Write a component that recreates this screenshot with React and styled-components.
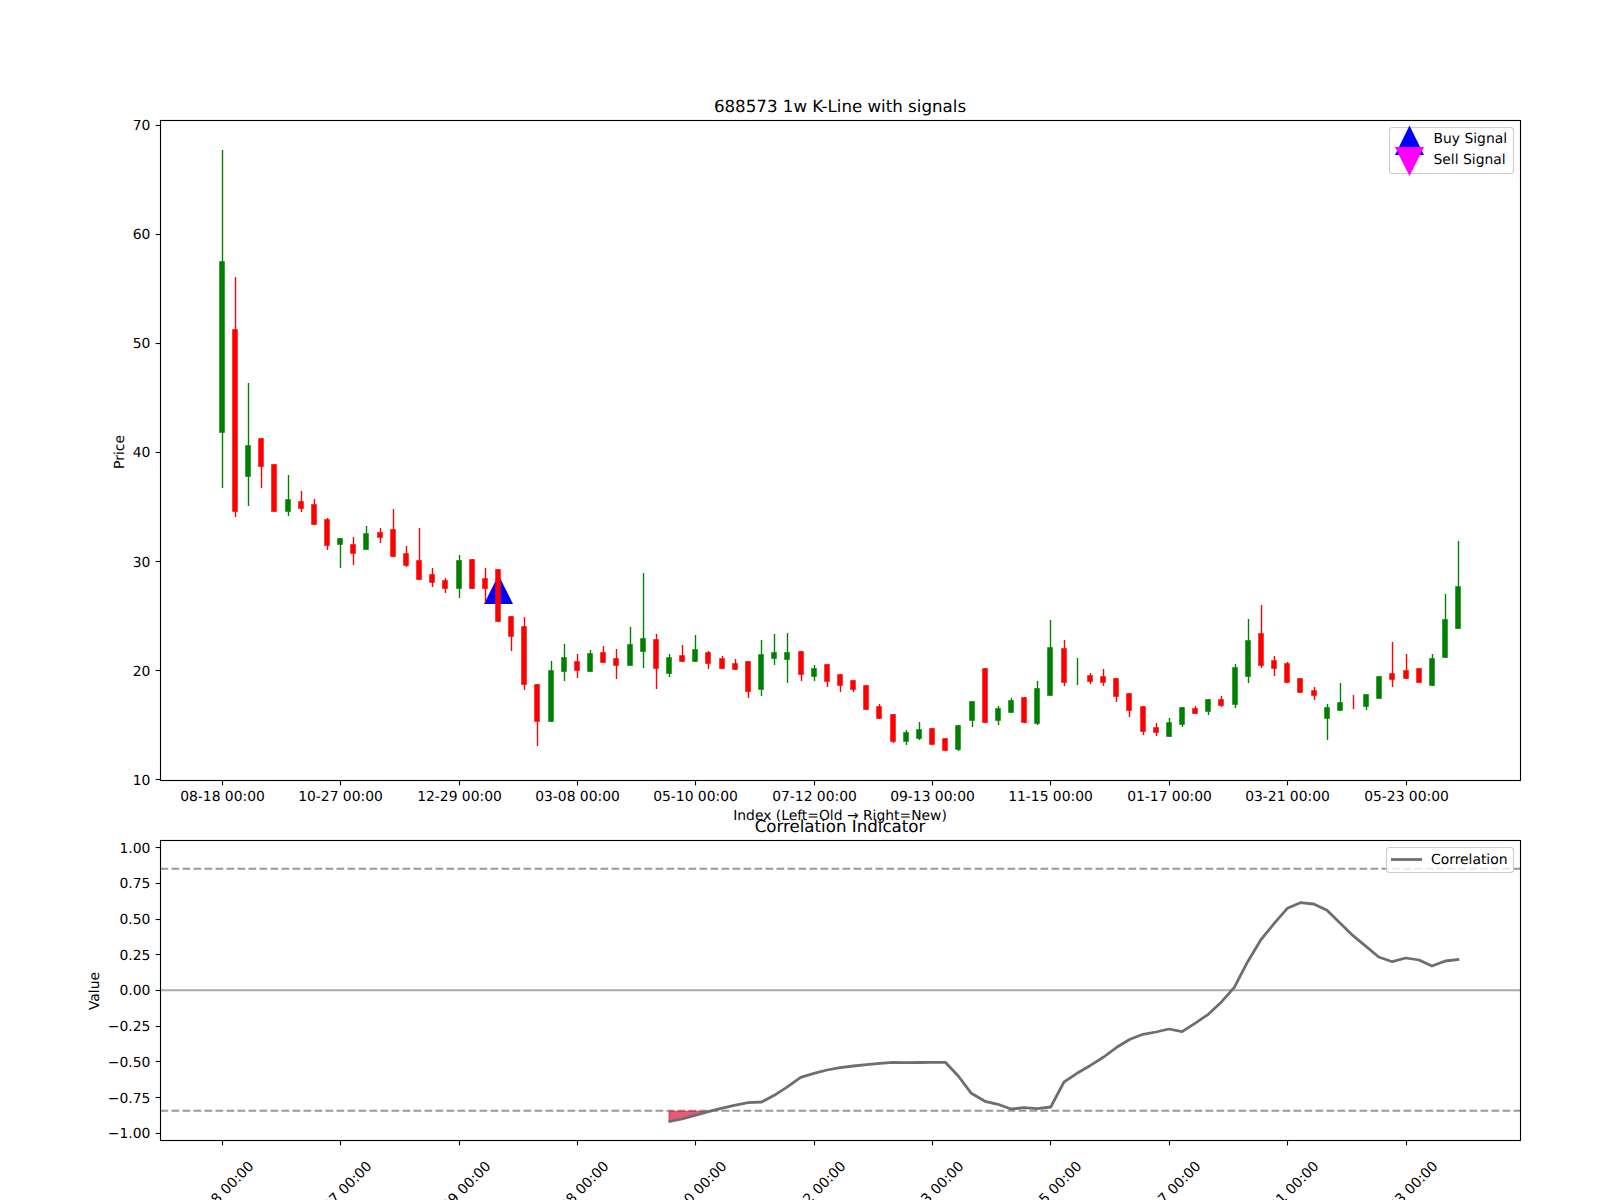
import React from 'react';
import styled, { createGlobalStyle } from 'styled-components';

const GlobalStyle = createGlobalStyle`
  html, body { margin: 0; padding: 0; background: #fff; }
`;

const Page = styled.div`
  width: 1600px;
  height: 1200px;
  overflow: hidden;
  background: #fff;
  display: flex;
  flex-direction: column;
`;

const Plot = styled.svg`
  display: block;
  flex: none;
  overflow: visible;
  font-family: 'DejaVu Sans', sans-serif;
  text-rendering: geometricPrecision;
`;

const TickLabel = styled.text`
  font-size: 13.89px;
  fill: #000;
  text-anchor: ${(p) => p.$anchor || 'middle'};
`;

const AxisLabel = styled.text`
  font-size: 13.89px;
  fill: #000;
  text-anchor: middle;
`;

const ChartTitle = styled.text`
  font-size: 16.67px;
  fill: #000;
  text-anchor: middle;
`;

const LegendText = styled.text`
  font-size: 13.89px;
  fill: #000;
`;

const LegendBox = styled.rect`
  fill: #fff;
  fill-opacity: 0.8;
  stroke: #ccc;
  stroke-width: 1.1;
`;

const Spines = styled.rect`
  fill: none;
  stroke: #000;
  stroke-width: 1.11;
`;

const Tick = styled.line`
  stroke: #000;
  stroke-width: 1.11;
`;

const Wick = styled.line`
  stroke: ${(p) => (p.$up ? '#ff0000' : '#008000')};
  stroke-width: 1.39;
`;

const Body = styled.rect`
  fill: ${(p) => (p.$up ? '#ff0000' : '#008000')};
  stroke: ${(p) => (p.$up ? '#ff0000' : '#008000')};
  stroke-opacity: 0.5;
  stroke-width: 1;
`;

const RefLine = styled.line`
  stroke: ${(p) => (p.$dashed ? '#999' : '#aaa')};
  stroke-width: 2.08;
  stroke-dasharray: ${(p) => (p.$dashed ? '7.7 3.3' : 'none')};
`;

const CorrLine = styled.polyline`
  fill: none;
  stroke: #6e6e6e;
  stroke-width: 2.78;
  stroke-linejoin: round;
`;

const LEFT = 160.5;
const RIGHT = 1520.5;

const X_TICKS = [
  [222.5, '08-18 00:00'],
  [340.5, '10-27 00:00'],
  [459.5, '12-29 00:00'],
  [577.5, '03-08 00:00'],
  [695.5, '05-10 00:00'],
  [814.5, '07-12 00:00'],
  [932.5, '09-13 00:00'],
  [1050.5, '11-15 00:00'],
  [1169.5, '01-17 00:00'],
  [1287.5, '03-21 00:00'],
  [1406.5, '05-23 00:00'],
];

// tick y, label, label baseline
const PRICE_TICKS = [
  [125.5, '70', 130],
  [234.5, '60', 239],
  [343.5, '50', 348],
  [452.5, '40', 457],
  [561.5, '30', 567],
  [670.5, '20', 676],
  [779.5, '10', 785],
];

const CORR_TICKS = [
  [847.5, '1.00', 853],
  [883.5, '0.75', 888],
  [919.5, '0.50', 924],
  [954.5, '0.25', 960],
  [990.5, '0.00', 995],
  [1026.5, '−0.25', 1031],
  [1061.5, '−0.50', 1067],
  [1097.5, '−0.75', 1103],
  [1133.5, '−1.00', 1138],
];

// x, red?, wick top, body top, body bottom, wick bottom (all in page pixels)
const CANDLES = [
  [222, 0, 150, 261, 433, 488],
  [235, 1, 277, 329, 512, 517],
  [248, 0, 383, 445, 477, 506],
  [261, 1, 438, 438, 467, 488],
  [274, 1, 464, 464, 512, 512],
  [288, 0, 475, 499, 512, 516],
  [301, 1, 491, 501, 509, 512],
  [314, 1, 499, 504, 525, 525],
  [327, 1, 518, 519, 546, 550],
  [340, 0, 538, 538, 545, 568],
  [353, 1, 537, 544, 554, 565],
  [366, 0, 526, 533, 550, 550],
  [380, 1, 528, 532, 538, 543],
  [393, 1, 509, 529, 557, 557],
  [406, 1, 546, 553, 566, 567],
  [419, 1, 528, 560, 580, 580],
  [432, 1, 568, 574, 583, 587],
  [445, 1, 578, 580, 589, 593],
  [459, 0, 555, 560, 589, 598],
  [472, 1, 559, 559, 589, 589],
  [485, 1, 568, 578, 589, 603],
  [498, 1, 569, 569, 622, 622],
  [511, 1, 616, 616, 637, 651],
  [524, 1, 617, 626, 685, 690],
  [537, 1, 684, 684, 722, 746],
  [551, 0, 661, 670, 722, 722],
  [564, 0, 644, 657, 672, 681],
  [577, 1, 654, 661, 671, 678],
  [590, 0, 650, 653, 672, 672],
  [603, 1, 646, 652, 663, 663],
  [616, 1, 649, 658, 666, 679],
  [630, 0, 627, 644, 666, 666],
  [643, 0, 573, 638, 652, 668],
  [656, 1, 634, 639, 669, 689],
  [669, 0, 654, 657, 674, 677],
  [682, 1, 645, 655, 662, 662],
  [695, 0, 635, 649, 662, 662],
  [708, 1, 651, 652, 664, 669],
  [722, 1, 656, 658, 669, 669],
  [735, 1, 659, 663, 670, 670],
  [748, 1, 661, 661, 692, 698],
  [761, 0, 640, 654, 690, 696],
  [774, 0, 634, 652, 659, 665],
  [787, 0, 633, 652, 660, 683],
  [801, 1, 651, 651, 675, 681],
  [814, 0, 665, 668, 677, 681],
  [827, 1, 664, 664, 682, 687],
  [840, 1, 674, 674, 686, 692],
  [853, 1, 680, 680, 690, 692],
  [866, 1, 685, 685, 710, 710],
  [879, 1, 704, 706, 719, 719],
  [893, 1, 714, 714, 742, 743],
  [906, 0, 730, 732, 742, 745],
  [919, 0, 722, 729, 739, 740],
  [932, 1, 728, 728, 745, 745],
  [945, 1, 738, 738, 751, 751],
  [958, 0, 725, 725, 750, 751],
  [972, 0, 701, 701, 721, 727],
  [985, 1, 668, 668, 723, 723],
  [998, 0, 706, 708, 721, 725],
  [1011, 0, 698, 700, 713, 713],
  [1024, 1, 697, 697, 723, 723],
  [1037, 0, 681, 688, 724, 725],
  [1050, 0, 620, 647, 696, 696],
  [1064, 1, 640, 648, 683, 686],
  [1077, 0, 658, 671, 671, 685],
  [1090, 1, 673, 675, 682, 684],
  [1103, 1, 669, 676, 683, 686],
  [1116, 1, 678, 678, 697, 702],
  [1129, 1, 693, 693, 711, 717],
  [1143, 1, 706, 706, 732, 735],
  [1156, 1, 723, 727, 733, 736],
  [1169, 0, 718, 722, 737, 737],
  [1182, 0, 707, 707, 725, 727],
  [1195, 1, 706, 708, 714, 714],
  [1208, 0, 699, 699, 712, 715],
  [1221, 1, 696, 699, 706, 707],
  [1235, 0, 664, 667, 705, 708],
  [1248, 0, 619, 640, 677, 683],
  [1261, 1, 605, 633, 666, 668],
  [1274, 1, 656, 660, 669, 676],
  [1287, 1, 662, 663, 683, 683],
  [1300, 1, 678, 678, 693, 693],
  [1314, 1, 687, 690, 696, 700],
  [1327, 0, 704, 707, 719, 740],
  [1340, 0, 683, 702, 711, 711],
  [1353, 1, 695, 702, 702, 709],
  [1366, 0, 694, 694, 707, 710],
  [1379, 0, 676, 676, 699, 699],
  [1392, 1, 642, 673, 680, 687],
  [1406, 1, 654, 670, 679, 679],
  [1419, 1, 668, 668, 683, 683],
  [1432, 0, 654, 658, 686, 686],
  [1445, 0, 594, 619, 658, 658],
  [1458, 0, 541, 586, 629, 629],
];

const CORRELATION = [
  [668.5, 1121.7], [682, 1119], [695, 1115.3], [708.3, 1111.7], [721.3, 1108.3],
  [734.3, 1105.3], [748, 1102.7], [761.7, 1102], [774.3, 1095.3], [787.7, 1086.7],
  [800.7, 1077.3], [814, 1073.3], [827, 1070], [840, 1067.7], [853.3, 1066],
  [866.7, 1064.7], [880, 1063.3], [893, 1062.3], [906, 1062.7], [919, 1062.5],
  [932.3, 1062.3], [945.3, 1062.3], [958.3, 1076], [971.3, 1093.3], [985, 1101.3],
  [998, 1104.3], [1011, 1109], [1024, 1107.7], [1037.3, 1108.7], [1050.7, 1107],
  [1064, 1082], [1077, 1073.3], [1090, 1065.7], [1103.7, 1057], [1116.7, 1047.3],
  [1130, 1039.3], [1143, 1034.3], [1156, 1032], [1169, 1029], [1182, 1031.7],
  [1195, 1023.3], [1208.3, 1014.3], [1221.7, 1001.7], [1234.3, 987.3], [1247.7, 961.7],
  [1260.7, 940], [1274, 923.7], [1287.3, 908.3], [1300.3, 902.7], [1313.7, 904],
  [1327, 910.3], [1340, 923], [1353, 935.7], [1366, 946.3], [1378.7, 957],
  [1392.3, 961.7], [1405.7, 958], [1419, 960], [1432, 966], [1445.3, 961],
  [1459.3, 959.3],
];

const points = (list) => list.map((p) => p.join(',')).join(' ');

const Candle = ({ candle: [x, red, wickTop, top, bottom, wickBottom] }) => (
  <g>
    <Wick $up={red} x1={x + 0.5} x2={x + 0.5} y1={wickTop} y2={wickBottom} />
    {bottom > top && (
      <Body $up={red} x={x - 2.5} y={top + 0.5} width={5} height={bottom - top - 1} />
    )}
  </g>
);

const YAxis = ({ ticks }) =>
  ticks.map(([y, label, baseline]) => (
    <g key={label}>
      <Tick x1={LEFT - 4.86} x2={LEFT} y1={y} y2={y} />
      <TickLabel $anchor="end" x={150.3} y={baseline}>
        {label}
      </TickLabel>
    </g>
  ));

const PriceChart = () => (
  <Plot width="1600" height="820" viewBox="0 0 1600 820">
    <ChartTitle x="840" y="112">688573 1w K-Line with signals</ChartTitle>
    <polygon points="484,604 513,604 498.5,575" fill="#0000ff" />
    {CANDLES.map((c) => (
      <Candle key={c[0]} candle={c} />
    ))}
    <Spines x={LEFT} y="120.5" width={RIGHT - LEFT} height="660" />
    <YAxis ticks={PRICE_TICKS} />
    <AxisLabel transform="translate(124 452) rotate(-90)">Price</AxisLabel>
    {X_TICKS.map(([x, label]) => (
      <g key={label}>
        <Tick x1={x} x2={x} y1="780.5" y2="785.4" />
        <TickLabel x={x} y="801">{label}</TickLabel>
      </g>
    ))}
    <AxisLabel x="840" y="820">Index (Left=Old → Right=New)</AxisLabel>
    <LegendBox x="1389.5" y="127.5" width="124" height="46" rx="3" />
    <polygon points="1395,155 1424,155 1409.5,125.5" fill="#0000ff" />
    <polygon points="1395,147 1424,147 1409.5,176" fill="#ff00ff" />
    <LegendText x="1433.5" y="142.5">Buy Signal</LegendText>
    <LegendText x="1433.5" y="163.5">Sell Signal</LegendText>
  </Plot>
);

const CorrelationChart = () => (
  <Plot width="1600" height="380" viewBox="0 820 1600 380">
    <ChartTitle x="840" y="832">Correlation Indicator</ChartTitle>
    <RefLine $dashed x1={LEFT} x2={RIGHT} y1="868.8" y2="868.8" />
    <RefLine x1={LEFT} x2={RIGHT} y1="990.3" y2="990.3" />
    <RefLine $dashed x1={LEFT} x2={RIGHT} y1="1110.8" y2="1110.8" />
    <polygon
      points="669,1111.2 708,1111.2 695,1115.3 682,1119 669,1121.7"
      fill="#dc143c"
      fillOpacity="0.7"
      stroke="#dc143c"
      strokeOpacity="0.7"
    />
    <CorrLine points={points(CORRELATION)} />
    <Spines x={LEFT} y="840.5" width={RIGHT - LEFT} height="300" />
    <YAxis ticks={CORR_TICKS} />
    <AxisLabel transform="translate(99 991) rotate(-90)">Value</AxisLabel>
    {X_TICKS.map(([x, label]) => (
      <g key={label}>
        <Tick x1={x} x2={x} y1="1140.5" y2="1145.4" />
        <TickLabel transform={`translate(${x + 2} 1197) rotate(-45)`}>{label}</TickLabel>
      </g>
    ))}
    <LegendBox x="1386.5" y="847.5" width="127" height="25" rx="3" />
    <line x1="1391" x2="1422" y1="859.5" y2="859.5" stroke="#6e6e6e" strokeWidth="2.78" />
    <LegendText x="1431" y="863.5">Correlation</LegendText>
  </Plot>
);

export default function App() {
  return (
    <Page>
      <GlobalStyle />
      <PriceChart />
      <CorrelationChart />
    </Page>
  );
}
